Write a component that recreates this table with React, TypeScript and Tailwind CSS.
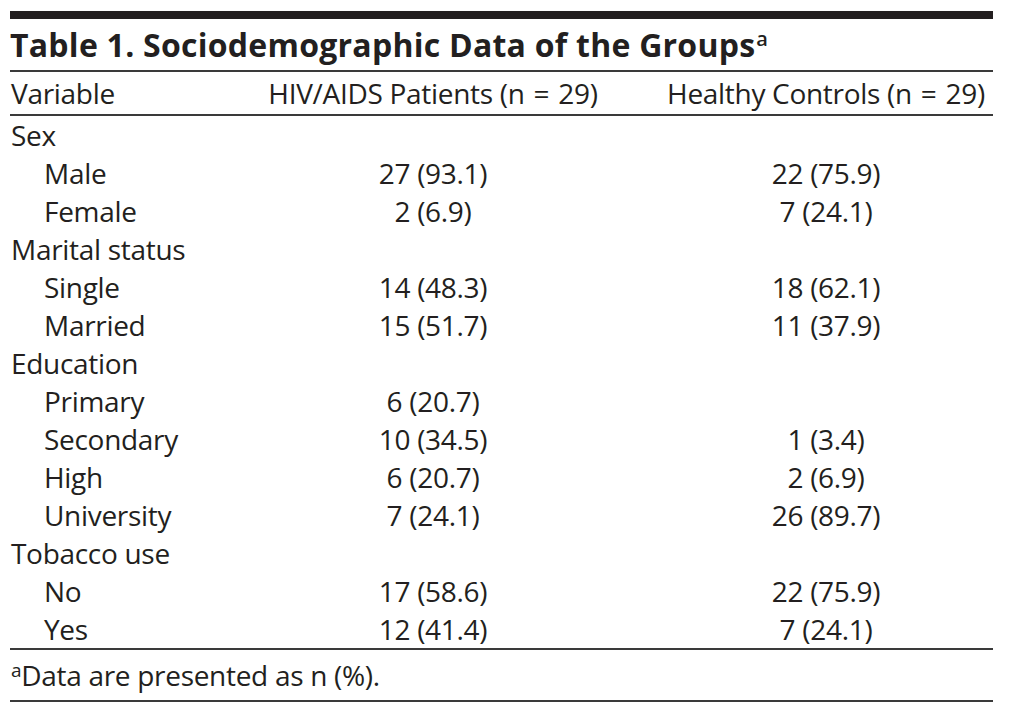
import React from "react";

type Row = { label: string; indent?: boolean; a?: string; b?: string };

const rows: Row[] = [
  { label: "Sex" },
  { label: "Male", indent: true, a: "27 (93.1)", b: "22 (75.9)" },
  { label: "Female", indent: true, a: "2 (6.9)", b: "7 (24.1)" },
  { label: "Marital status" },
  { label: "Single", indent: true, a: "14 (48.3)", b: "18 (62.1)" },
  { label: "Married", indent: true, a: "15 (51.7)", b: "11 (37.9)" },
  { label: "Education" },
  { label: "Primary", indent: true, a: "6 (20.7)", b: "" },
  { label: "Secondary", indent: true, a: "10 (34.5)", b: "1 (3.4)" },
  { label: "High", indent: true, a: "6 (20.7)", b: "2 (6.9)" },
  { label: "University", indent: true, a: "7 (24.1)", b: "26 (89.7)" },
  { label: "Tobacco use" },
  { label: "No", indent: true, a: "17 (58.6)", b: "22 (75.9)" },
  { label: "Yes", indent: true, a: "12 (41.4)", b: "7 (24.1)" },
];

export default function App() {
  return (
    <div
      className="w-[1020px] h-[720px] bg-white text-[#231f20] overflow-hidden"
      style={{ fontFamily: '"Open Sans", "Noto Sans", sans-serif' }}
    >
      <div className="ml-[10px] w-[983px] pt-[11px]">
        <div className="h-[8px] bg-[#231f20]" />
        <div className="h-[51px] flex items-center text-[32px] font-bold tracking-[0.25px] leading-none pt-[1px]">
          <span>
            Table 1. Sociodemographic Data of the Groups
            <span className="text-[20px] font-semibold relative top-[-11px] ml-[1px]">a</span>
          </span>
        </div>
        <div className="h-[2px] bg-[#3a3a3a]" />
        <div className="grid grid-cols-[197px_452px_334px] h-[42px] items-center text-[28px] tracking-[-0.3px] leading-none">
          <div className="pl-[1px]">Variable</div>
          <div className="text-center">
            HIV/AIDS Patients (n<span className="mx-[9px]">=</span>29)
          </div>
          <div className="text-center">
            Healthy Controls (n<span className="mx-[9px]">=</span>29)
          </div>
        </div>
        <div className="h-[2px] bg-[#3a3a3a]" />
        <div className="flex flex-col text-[28px] tracking-[-0.3px] leading-none">
          {rows.map((r, i) => (
            <div key={i} className="grid grid-cols-[197px_452px_334px] h-[38px] items-center">
              <div className={r.indent ? "pl-[34px]" : "pl-[1px]"}>{r.label}</div>
              <div className="text-center">{r.a ?? ""}</div>
              <div className="text-center">{r.b ?? ""}</div>
            </div>
          ))}
        </div>
        <div className="h-[2px] bg-[#3a3a3a]" />
        <div className="h-[50px] flex items-center text-[28px] tracking-[-0.3px] leading-none pl-[1px]">
          <span>
            <span className="text-[19px] relative top-[-9px]">a</span>Data are presented as n (%).
          </span>
        </div>
        <div className="h-[2px] bg-[#3a3a3a]" />
      </div>
    </div>
  );
}
